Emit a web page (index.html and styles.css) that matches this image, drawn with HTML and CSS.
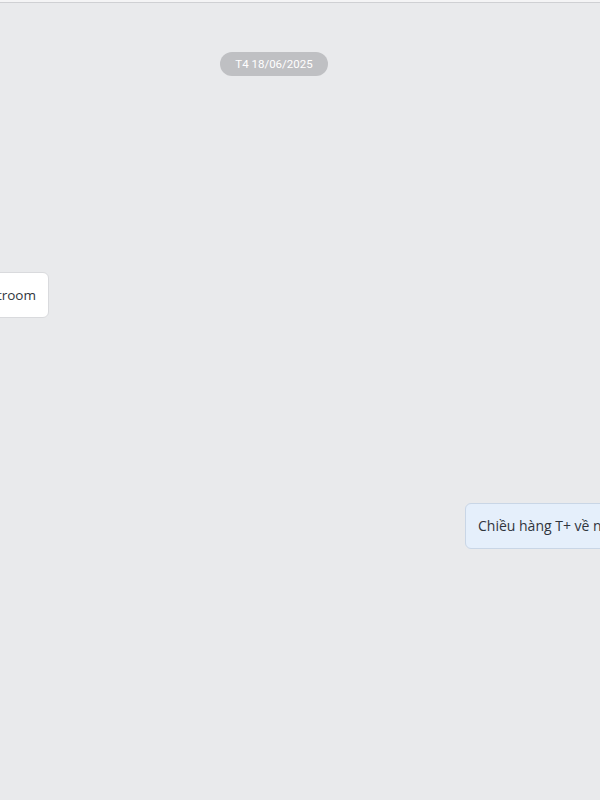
FILE: index.html
```html
<!DOCTYPE html>
<html lang="vi">
<head>
<meta charset="utf-8">
<link rel="stylesheet" href="styles.css">
</head>
<body>
<div class="topbar"></div>
<main class="chat">
  <div class="date-row"><span class="date-pill">T4 18/06/2025</span></div>
  <div class="msg-left-row">
    <div class="bubble bubble-in">Mang hàng qua restroom</div>
  </div>
  <div class="msg-right-row">
    <div class="bubble bubble-out">Chiều hàng T+ về nhà kho nhé</div>
  </div>
</main>
</body>
</html>
```
FILE: styles.css
```css
html, body {
  margin: 0;
  padding: 0;
  width: 600px;
  height: 800px;
  overflow: hidden;
  background: #e9eaec;
  font-family: "Open Sans", "Noto Sans", Arial, sans-serif;
}
.topbar {
  height: 2px;
  background: #f4f4f5;
  border-bottom: 1px solid #cfd0d3;
}
.chat {
  display: flex;
  flex-direction: column;
}
.date-row {
  display: flex;
  padding-left: 220px;
  margin-top: 49px;
}
.date-pill {
  width: 108px;
  height: 24px;
  line-height: 24px;
  border-radius: 12px;
  background: #bfc0c3;
  color: #fff;
  font-family: Roboto, "Open Sans", sans-serif;
  font-size: 11.5px;
  font-weight: 400;
  text-align: center;
}
.msg-left-row {
  display: flex;
  justify-content: flex-end;
  width: 49px;
  margin-top: 196px;
}
.bubble {
  white-space: nowrap;
  font-size: 14px;
  color: #30353d;
  height: 44px;
  line-height: 44px;
  padding: 0 12px;
  border-radius: 6px;
  flex-shrink: 0;
}
.bubble-in {
  background: #fff;
  border: 1px solid #d9dadd;
  font-size: 13.5px;
}
.bubble-out {
  background: #e5effb;
  border: 1px solid #c9d6e6;
}
.msg-right-row {
  display: flex;
  padding-left: 465px;
  margin-top: 185px;
}
```
